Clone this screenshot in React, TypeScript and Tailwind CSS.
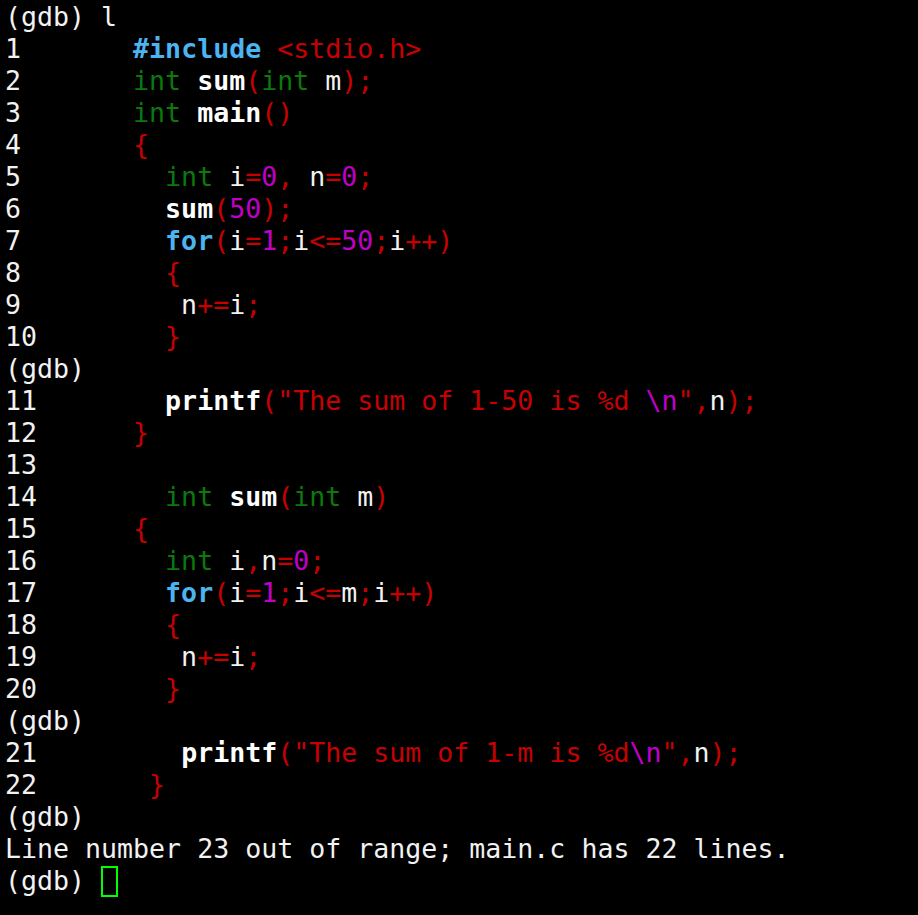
import React from "react";

type Seg = [string, string?];

const W = "text-[#f2f2f2]";
const B = "text-white font-bold";
const R = "text-[#c80000]";
const G = "text-[#0a7a0a]";
const M = "text-[#c000c8]";
const K = "text-[#4cb4f0] font-bold";

const num = (n: number) => (String(n) + "        ").slice(0, 8);

const lines: Seg[][] = [
	[["(gdb) l"]],
	[[num(1)], ["#include", K], [" "], ["<stdio.h>", R]],
	[[num(2)], ["int", G], [" "], ["sum", B], ["(", R], ["int", G], [" m"], [");", R]],
	[[num(3)], ["int", G], [" "], ["main", B], ["()", R]],
	[[num(4)], ["{", R]],
	[[num(5) + "  "], ["int", G], [" i"], ["=", R], ["0", M], [",", R], [" n"], ["=", R], ["0", M], [";", R]],
	[[num(6) + "  "], ["sum", B], ["(", R], ["50", M], [");", R]],
	[[num(7) + "  "], ["for", K], ["(", R], ["i"], ["=", R], ["1", M], [";", R], ["i"], ["<=", R], ["50", M], [";", R], ["i"], ["++)", R]],
	[[num(8) + "  "], ["{", R]],
	[[num(9) + "   n"], ["+=", R], ["i"], [";", R]],
	[[num(10) + "  "], ["}", R]],
	[["(gdb)"]],
	[[num(11) + "  "], ["printf", B], ['("The sum of 1-50 is %d ', R], ["\\n", M], ['",', R], ["n"], [");", R]],
	[[num(12)], ["}", R]],
	[[num(13)]],
	[[num(14) + "  "], ["int", G], [" "], ["sum", B], ["(", R], ["int", G], [" m"], [")", R]],
	[[num(15)], ["{", R]],
	[[num(16) + "  "], ["int", G], [" i"], [",", R], ["n"], ["=", R], ["0", M], [";", R]],
	[[num(17) + "  "], ["for", K], ["(", R], ["i"], ["=", R], ["1", M], [";", R], ["i"], ["<=", R], ["m"], [";", R], ["i"], ["++)", R]],
	[[num(18) + "  "], ["{", R]],
	[[num(19) + "   n"], ["+=", R], ["i"], [";", R]],
	[[num(20) + "  "], ["}", R]],
	[["(gdb)"]],
	[[num(21) + "   "], ["printf", B], ['("The sum of 1-m is %d', R], ["\\n", M], ['",', R], ["n"], [");", R]],
	[[num(22) + " "], ["}", R]],
	[["(gdb)"]],
	[["Line number 23 out of range; main.c has 22 lines."]],
];

export default function App() {
	return (
		<div className="w-[918px] h-[915px] bg-black overflow-hidden pl-[5px] pt-[1px] font-['DejaVu_Sans_Mono',monospace] text-[26.6px] leading-[32px] text-[#f2f2f2]">
			{lines.map((segs, i) => (
				<div key={i} className="h-[32px] whitespace-pre">
					{segs.map(([t, c], j) => (
						<span key={j} className={c ?? W}>
							{t}
						</span>
					))}
				</div>
			))}
			<div className="h-[32px] whitespace-pre flex items-center">
				<span>(gdb) </span>
				<span className="inline-block w-[17px] h-[31px] border-2 border-[#00ff00]" />
			</div>
		</div>
	);
}
